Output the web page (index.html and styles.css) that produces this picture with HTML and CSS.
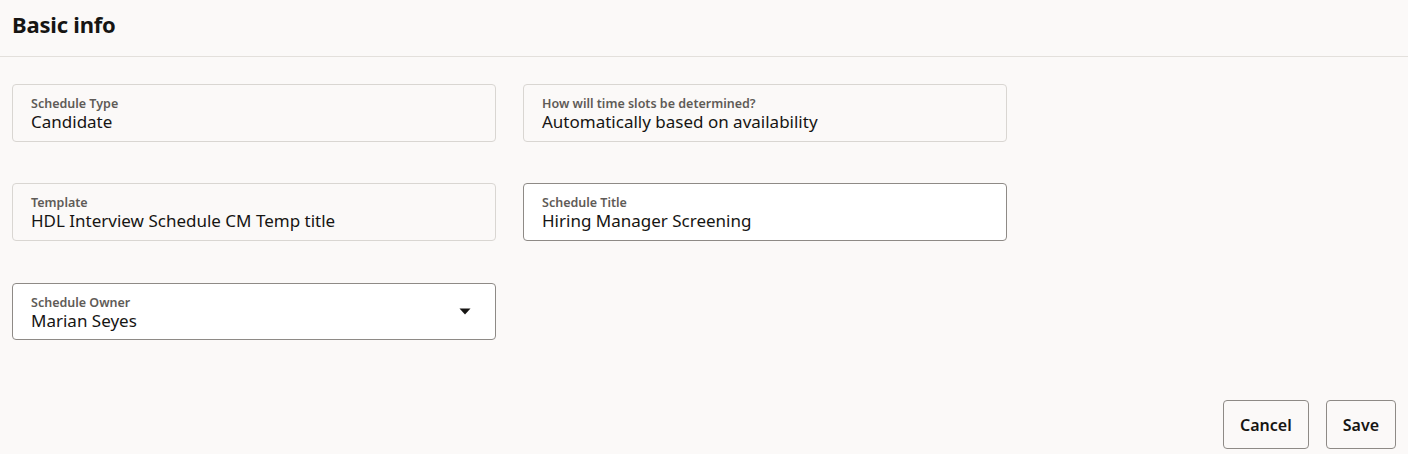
FILE: index.html
```html
<!DOCTYPE html>
<html>
<head>
<meta charset="utf-8">
<link rel="stylesheet" href="styles.css">
</head>
<body>
<header class="page-header">
  <h1 class="title">Basic info</h1>
</header>
<main class="content">
  <div class="form-grid">
    <div class="field readonly">
      <div class="label">Schedule Type</div>
      <div class="value">Candidate</div>
    </div>
    <div class="field readonly">
      <div class="label">How will time slots be determined?</div>
      <div class="value">Automatically based on availability</div>
    </div>
    <div class="field readonly">
      <div class="label">Template</div>
      <div class="value">HDL Interview Schedule CM Temp title</div>
    </div>
    <div class="field editable">
      <div class="label">Schedule Title</div>
      <div class="value">Hiring Manager Screening</div>
    </div>
    <div class="field editable select">
      <div class="field-text">
        <div class="label">Schedule Owner</div>
        <div class="value">Marian Seyes</div>
      </div>
      <svg class="caret" width="12" height="7" viewBox="0 0 12 7"><path d="M0.5 0.5 L11.5 0.5 L6 6.5 Z" fill="#161513"/></svg>
    </div>
  </div>
  <div class="actions">
    <button class="btn">Cancel</button>
    <button class="btn">Save</button>
  </div>
</main>
</body>
</html>
```
FILE: styles.css
```css
html, body {
  margin: 0;
  padding: 0;
  background: #fbf9f8;
  font-family: "Noto Sans", "Open Sans", sans-serif;
  color: #161513;
}
.page-header {
  height: 57px;
  box-sizing: border-box;
  border-bottom: 1px solid #e3e0dc;
  padding: 8px 12px 0;
}
.title {
  margin: 0;
  font-size: 22px;
  font-weight: 700;
  line-height: 32px;
  letter-spacing: -0.2px;
}
.content {
  padding: 27px 12px 0;
}
.form-grid {
  display: grid;
  grid-template-columns: 484px 484px;
  column-gap: 27px;
  row-gap: 41px;
}
.field {
  height: 58px;
  box-sizing: border-box;
  border-radius: 4px;
  padding: 11px 18px 0;
  border: 1px solid #d9d6d2;
  background: #fbf9f8;
}
.field.editable {
  border-color: #8e8a86;
  background: #ffffff;
}
.field.select {
  margin-top: 1px;
  height: 57px;
  display: flex;
  justify-content: space-between;
  align-items: flex-start;
  padding-right: 24px;
}
.caret {
  margin-top: 13px;
}
.label {
  font-size: 12.5px;
  font-weight: 600;
  color: #5f5b57;
  line-height: 16px;
}
.value {
  font-size: 17px;
  line-height: 20px;
  color: #161513;
}
.actions {
  display: flex;
  justify-content: flex-end;
  gap: 17px;
  margin-top: 60px;
}
.btn {
  height: 49px;
  box-sizing: border-box;
  border: 1px solid #8e8a86;
  border-radius: 4px;
  background: #fbf9f8;
  font-family: "Noto Sans", "Open Sans", sans-serif;
  font-size: 16px;
  font-weight: 600;
  color: #161513;
  padding: 0 16px;
}
```
